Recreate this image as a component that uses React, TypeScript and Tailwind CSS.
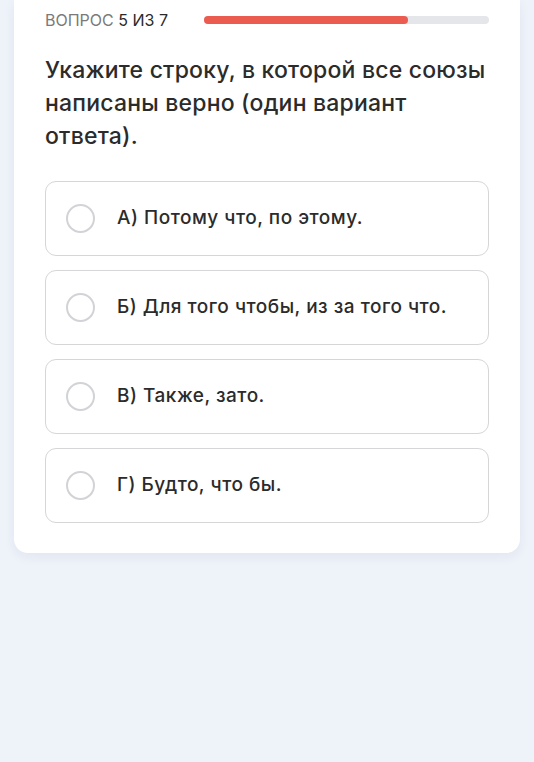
const options = [
  "А) Потому что, по этому.",
  "Б) Для того чтобы, из за того что.",
  "В) Также, зато.",
  "Г) Будто, что бы.",
];

export default function App() {
  return (
    <div className="min-h-[762px] bg-[#eef2f9] font-['Inter','Roboto',sans-serif]">
      <div className="mx-[14px] rounded-b-[14px] bg-white px-[31px] pt-[10px] pb-[30px] shadow-[0_4px_12px_rgba(30,40,80,0.06)]">
        {/* Progress header */}
        <div className="flex items-center">
          <p className="w-[159px] text-[16px] leading-5 text-[#7a7a7a]">
            ВОПРОС <span className="text-[#2a2a2a]">5 ИЗ 7</span>
          </p>
          <div className="h-2 flex-1 rounded-full bg-[#e5e6ea]">
            <div className="h-2 rounded-full bg-[#ec5b4f]" style={{ width: `${(5 / 7) * 100}%` }} />
          </div>
        </div>

        {/* Question */}
        <h1 className="mt-[24px] text-[23px] font-medium leading-[33px] tracking-[0.2px] text-[#2b2b2b]">
          Укажите строку, в которой все союзы написаны верно (один вариант ответа).
        </h1>

        {/* Answers */}
        <div className="mt-[28px] flex flex-col gap-[14px]">
          {options.map((opt) => (
            <div
              key={opt}
              className="flex h-[75px] items-center rounded-[11px] border border-[#d6d6d9] px-[20px]"
            >
              <span className="h-[29px] w-[29px] rounded-full border-[2.5px] border-[#d2d3d6]" />
              <span className="ml-[22px] text-[19px] font-medium tracking-[0.5px] text-[#2b2b2b]">{opt}</span>
            </div>
          ))}
        </div>
      </div>
    </div>
  );
}
